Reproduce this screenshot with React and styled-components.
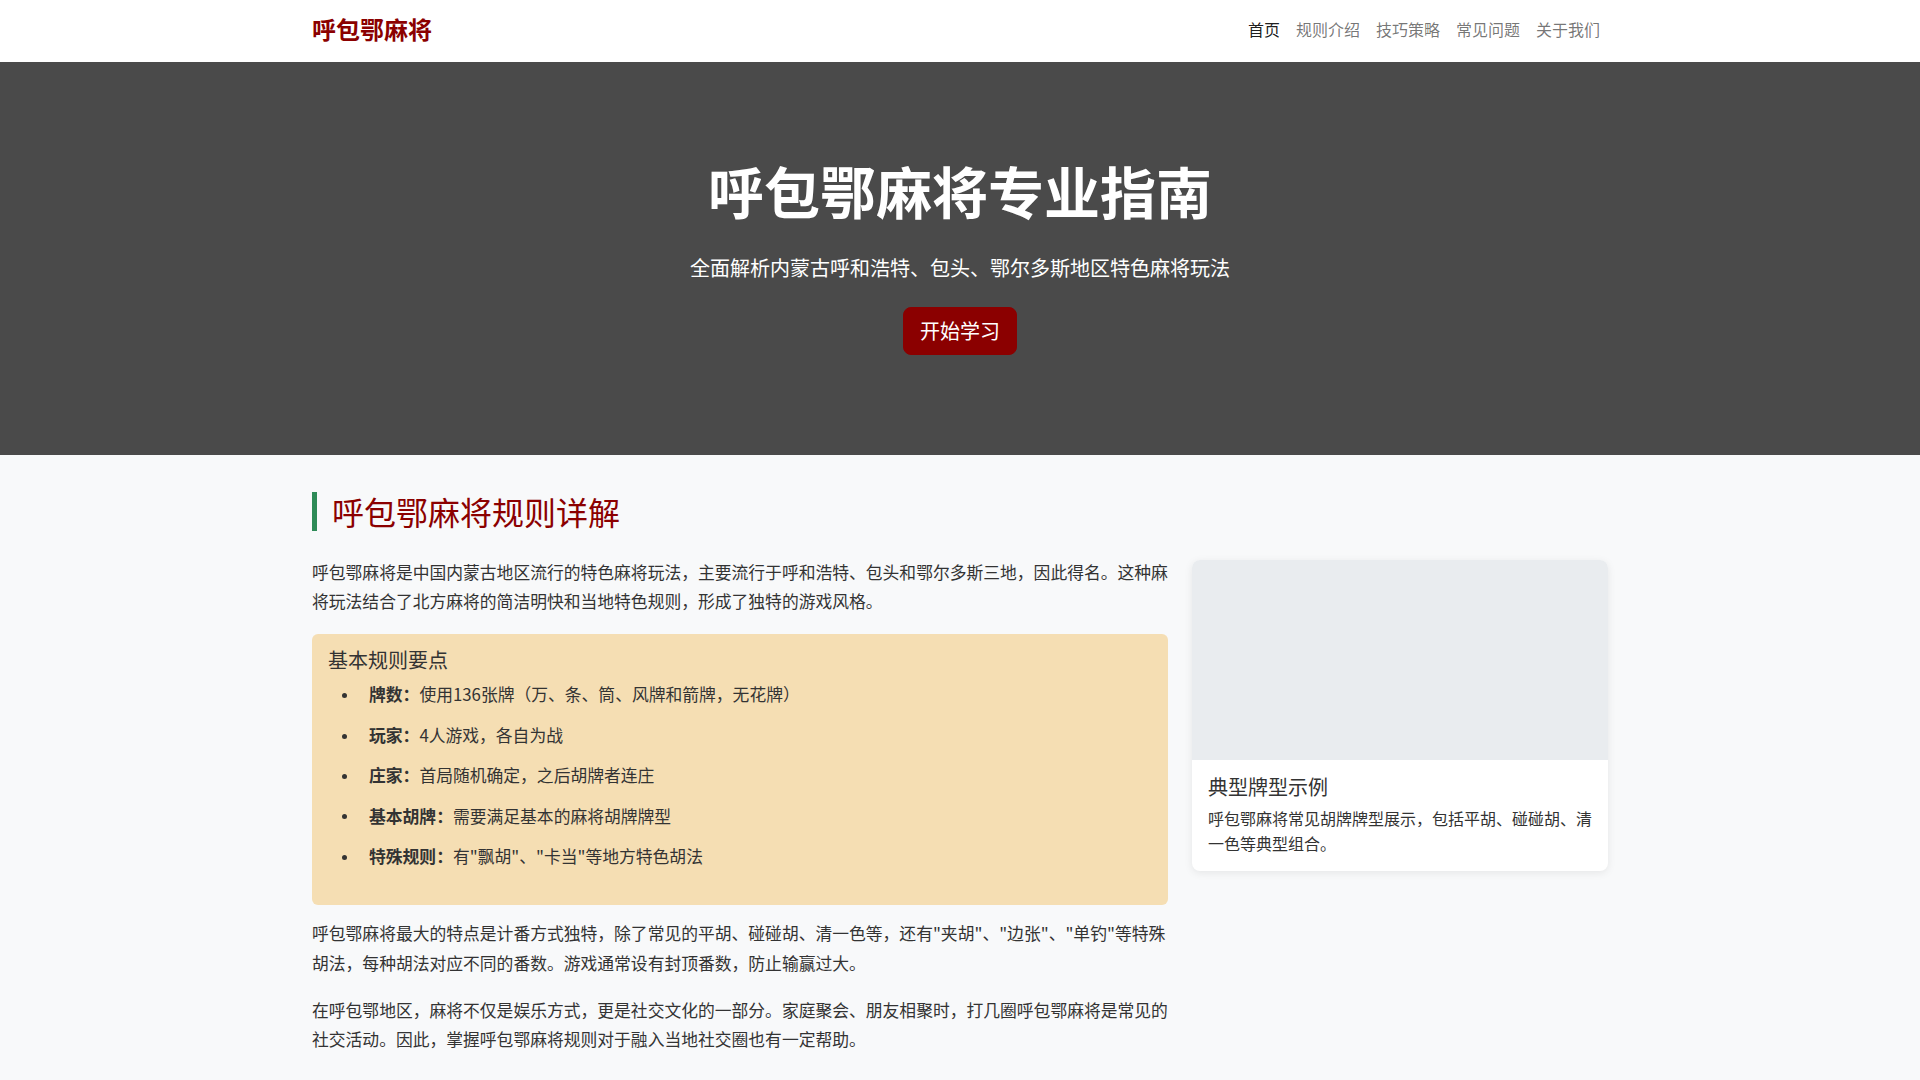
import React from "react";
import styled, { createGlobalStyle } from "styled-components";

const GlobalStyle = createGlobalStyle`
  * {
    box-sizing: border-box;
  }
  body {
    margin: 0;
    font-family: "Noto Sans CJK SC", "Noto Sans", sans-serif;
    font-size: 16px;
    line-height: 1.5;
    color: #333;
    background: #f8f9fa;
  }
`;

const Container = styled.div`
  width: 1320px;
  margin: 0 auto;
  padding: 0 12px;
`;

const Navbar = styled.nav`
  background: #fff;
  padding: 6px 0 10px;
  box-shadow: 0 1px 2px rgba(0, 0, 0, 0.05);
`;

const NavInner = styled(Container)`
  display: flex;
  align-items: center;
  justify-content: space-between;
`;

const Brand = styled.a`
  color: #8b0000;
  font-size: 24px;
  font-weight: 700;
  line-height: 36px;
  padding: 5px 0;
  text-decoration: none;
`;

const NavList = styled.ul`
  display: flex;
  list-style: none;
  margin: 0;
  padding: 0;
`;

const NavLink = styled.a`
  display: block;
  padding: 8px;
  font-size: 16px;
  line-height: 24px;
  text-decoration: none;
  color: ${(props) => (props.$active ? "rgba(0, 0, 0, 0.9)" : "rgba(0, 0, 0, 0.55)")};
`;

const Hero = styled.header`
  background: #4a4a4a;
  color: #fff;
  text-align: center;
  padding: 94px 0 100px;
`;

const HeroTitle = styled.h1`
  margin: 0 0 30px;
  font-size: 56px;
  font-weight: 700;
  line-height: 1.2;
`;

const HeroLead = styled.p`
  margin: 0 0 24px;
  font-size: 20px;
  line-height: 1.5;
  font-weight: 400;
`;

const PrimaryButton = styled.a`
  display: inline-block;
  background: #8b0000;
  color: #fff;
  border: 1px solid #8b0000;
  border-radius: 8px;
  padding: 8px 16px;
  font-size: 20px;
  line-height: 1.5;
  text-decoration: none;
`;

const Section = styled.section`
  padding: 37px 0 48px;
`;

const SectionTitle = styled.h2`
  margin: 0 0 27px;
  padding-left: 15px;
  border-left: 5px solid #2e8b57;
  color: #8b0000;
  font-size: 32px;
  font-weight: 400;
  line-height: 1.2;
`;

const Row = styled.div`
  display: grid;
  grid-template-columns: 856px 416px;
  column-gap: 24px;
  align-items: start;
`;

const Paragraph = styled.p`
  margin: 0 0 18px;
  font-size: 16.8px;
  line-height: 1.75;
`;

const RuleBox = styled.div`
  background: #f5deb3;
  border-radius: 6px;
  padding: 14px 16px 23px;
  margin: 0 0 14px;
`;

const RuleTitle = styled.h4`
  margin: 0 0 8px;
  font-size: 20px;
  font-weight: 400;
  line-height: 1.2;
`;

const RuleList = styled.ul`
  margin: 0 0 8px;
  padding-left: 14px;
  list-style: none;
`;

const RuleItem = styled.li`
  font-size: 16.8px;
  line-height: 1.75;
  margin-bottom: 11px;
  &::before {
    content: "";
    display: inline-block;
    width: 5px;
    height: 5px;
    border-radius: 50%;
    background: #333;
    margin-right: 22px;
    vertical-align: middle;
    position: relative;
    top: -1px;
  }
`;

const Card = styled.div`
  background: #fff;
  border-radius: 8px;
  overflow: hidden;
  margin-top: 2px;
  box-shadow: 0 2px 8px rgba(0, 0, 0, 0.08);
`;

const CardImage = styled.div`
  height: 200px;
  background: #e9ecef;
`;

const CardBody = styled.div`
  padding: 15px 16px 16px;
`;

const CardTitle = styled.h5`
  margin: 0 0 7px;
  font-size: 20px;
  font-weight: 400;
  line-height: 1.2;
`;

const CardText = styled.p`
  margin: 0;
  font-size: 16px;
  line-height: 1.56;
`;

const navItems = ["首页", "规则介绍", "技巧策略", "常见问题", "关于我们"];

const rules = [
  ["牌数", "使用136张牌（万、条、筒、风牌和箭牌，无花牌）"],
  ["玩家", "4人游戏，各自为战"],
  ["庄家", "首局随机确定，之后胡牌者连庄"],
  ["基本胡牌", "需要满足基本的麻将胡牌牌型"],
  ["特殊规则", "有\"飘胡\"、\"卡当\"等地方特色胡法"],
];

export default function App() {
  return (
    <>
      <GlobalStyle />
      <Navbar>
        <NavInner>
          <Brand href="#">呼包鄂麻将</Brand>
          <NavList>
            {navItems.map((item, i) => (
              <li key={item}>
                <NavLink href="#" $active={i === 0}>
                  {item}
                </NavLink>
              </li>
            ))}
          </NavList>
        </NavInner>
      </Navbar>

      <Hero>
        <Container>
          <HeroTitle>呼包鄂麻将专业指南</HeroTitle>
          <HeroLead>全面解析内蒙古呼和浩特、包头、鄂尔多斯地区特色麻将玩法</HeroLead>
          <PrimaryButton href="#">开始学习</PrimaryButton>
        </Container>
      </Hero>

      <Section>
        <Container>
          <SectionTitle>呼包鄂麻将规则详解</SectionTitle>
          <Row>
            <div>
              <Paragraph>
                呼包鄂麻将是中国内蒙古地区流行的特色麻将玩法，主要流行于呼和浩特、包头和鄂尔多斯三地，因此得名。这种麻将玩法结合了北方麻将的简洁明快和当地特色规则，形成了独特的游戏风格。
              </Paragraph>
              <RuleBox>
                <RuleTitle>基本规则要点</RuleTitle>
                <RuleList>
                  {rules.map(([label, text]) => (
                    <RuleItem key={label}>
                      <strong>{label}：</strong>
                      {text}
                    </RuleItem>
                  ))}
                </RuleList>
              </RuleBox>
              <Paragraph>
                呼包鄂麻将最大的特点是计番方式独特，除了常见的平胡、碰碰胡、清一色等，还有"夹胡"、"边张"、"单钓"等特殊胡法，每种胡法对应不同的番数。游戏通常设有封顶番数，防止输赢过大。
              </Paragraph>
              <Paragraph>
                在呼包鄂地区，麻将不仅是娱乐方式，更是社交文化的一部分。家庭聚会、朋友相聚时，打几圈呼包鄂麻将是常见的社交活动。因此，掌握呼包鄂麻将规则对于融入当地社交圈也有一定帮助。
              </Paragraph>
            </div>
            <Card>
              <CardImage />
              <CardBody>
                <CardTitle>典型牌型示例</CardTitle>
                <CardText>
                  呼包鄂麻将常见胡牌牌型展示，包括平胡、碰碰胡、清一色等典型组合。
                </CardText>
              </CardBody>
            </Card>
          </Row>
        </Container>
      </Section>
    </>
  );
}
